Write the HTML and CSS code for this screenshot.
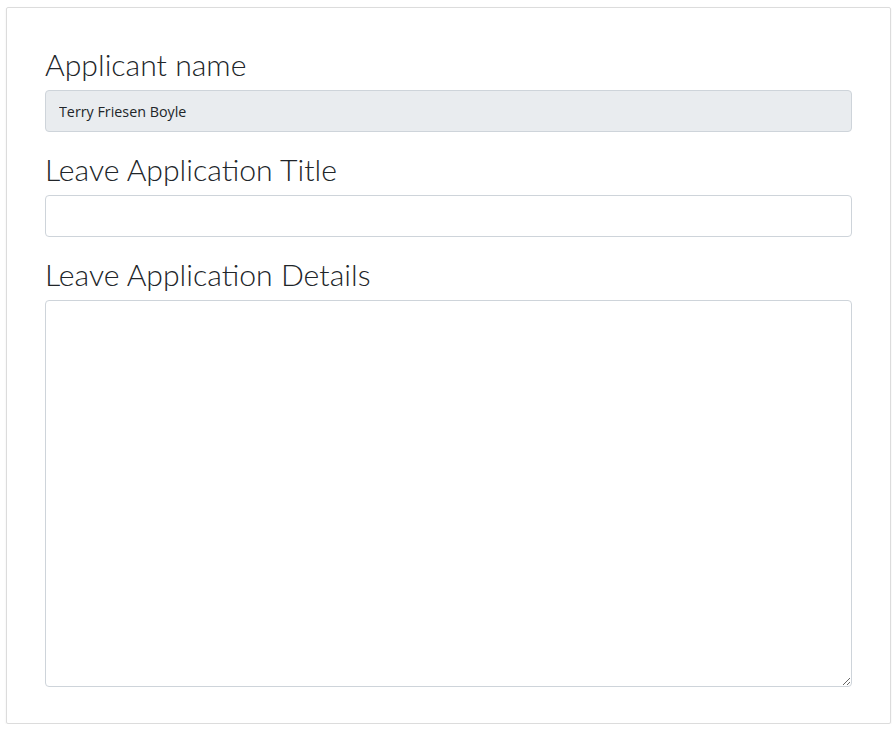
FILE: index.html
```html
<!DOCTYPE html>
<html lang="en">
<head>
<meta charset="utf-8">
<title>Leave Application</title>
<link rel="stylesheet" href="styles.css">
</head>
<body>
<div class="card">
  <form class="form">
    <div class="group">
      <label class="label" for="name">Applicant name</label>
      <input class="control" id="name" type="text" value="Terry Friesen Boyle" disabled>
    </div>
    <div class="group">
      <label class="label" for="title">Leave Application Title</label>
      <input class="control" id="title" type="text">
    </div>
    <div class="group">
      <label class="label" for="details">Leave Application Details</label>
      <textarea class="control area" id="details"></textarea>
    </div>
  </form>
</div>
</body>
</html>
```
FILE: styles.css
```css
html, body {
  margin: 0;
  padding: 0;
  background: #fff;
}
body {
  padding: 7px 1px 0 6px;
  font-family: "Open Sans", "Noto Sans", sans-serif;
  color: #212529;
}
.card {
  border: 1px solid #dcdcdc;
  border-radius: 2px;
  box-shadow: 0 1px 2px rgba(0,0,0,0.08);
  padding: 37px 38px 37px 38px;
  height: 717px;
  box-sizing: border-box;
}
.form {
  display: flex;
  flex-direction: column;
  gap: 18px;
}
.group {
  display: flex;
  flex-direction: column;
}
.label {
  font-family: "Lato", "Open Sans", sans-serif;
  font-size: 30.2px;
  font-weight: 300;
  line-height: 38px;
  margin-bottom: 7px;
  color: #212529;
}
.control {
  box-sizing: border-box;
  height: 42px;
  border: 1px solid #ced4da;
  border-radius: 4px;
  padding: 0 13px;
  font-family: "Open Sans", "Noto Sans", sans-serif;
  font-size: 14.3px;
  color: #212529;
  background: #fff;
  outline: none;
  width: 100%;
}
.control:disabled {
  background: #e9ecef;
  color: #212529;
  opacity: 1;
}
.area {
  height: 387px;
  padding: 8px 13px;
  resize: vertical;
}
```
